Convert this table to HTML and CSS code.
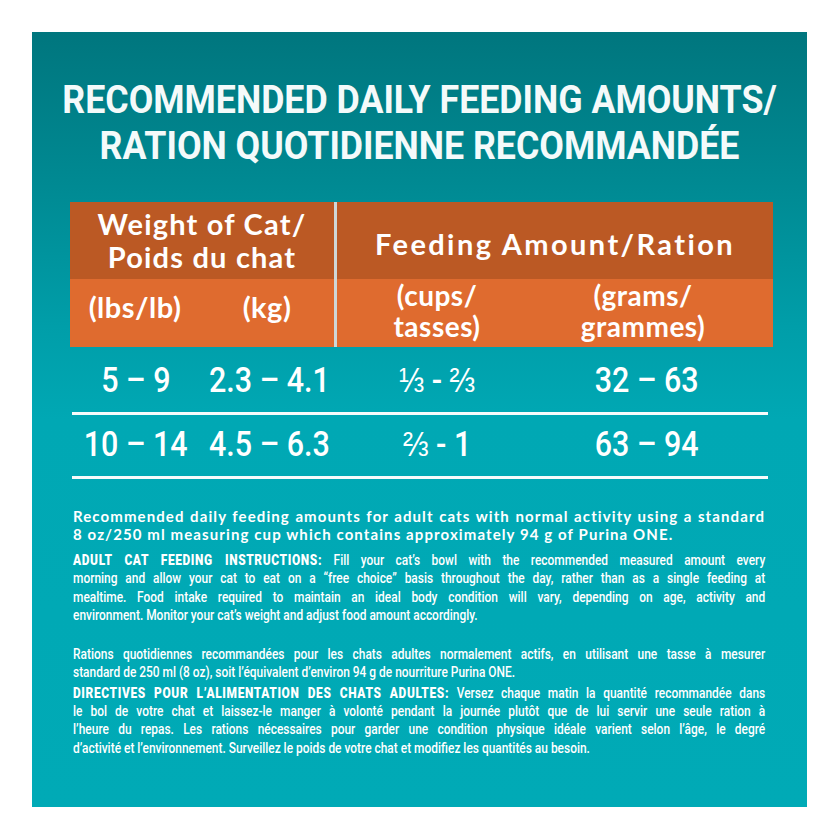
FILE: index.html
```html
<!DOCTYPE html>
<html lang="en">
<head>
<meta charset="utf-8">
<title>Recommended Daily Feeding Amounts</title>
<link rel="stylesheet" href="styles.css">
</head>
<body>
<div class="panel">
  <h1 class="title">RECOMMENDED DAILY FEEDING AMOUNTS/<br>RATION QUOTIDIENNE RECOMMANDÉE</h1>

  <div class="chart">
    <div class="cell dark weight">Weight of Cat/<br>Poids du chat</div>
    <div class="divider"></div>
    <div class="cell dark feeding">Feeding Amount/Ration</div>
    <div class="cell light unit c1">(lbs/lb)</div>
    <div class="cell light unit c2">(kg)</div>
    <div class="cell light unit2 c4">(cups/<br>tasses)</div>
    <div class="cell light unit2 c5">(grams/<br>grammes)</div>
  </div>

  <div class="rows">
    <div class="row r1">
      <span class="cellv"><span class="v">5 – 9</span></span>
      <span class="cellv"><span class="v">2.3 – 4.1</span></span>
      <span class="gap"></span>
      <span class="cellv"><span class="v frac">⅓ - ⅔</span></span>
      <span class="cellv grams"><span class="v">32 – 63</span></span>
    </div>
    <div class="row r2">
      <span class="cellv"><span class="v">10 – 14</span></span>
      <span class="cellv"><span class="v">4.5 – 6.3</span></span>
      <span class="gap"></span>
      <span class="cellv"><span class="v frac">⅔ - 1</span></span>
      <span class="cellv grams"><span class="v">63 – 94</span></span>
    </div>
  </div>

  <div class="notes">
    <p class="para p1">
      <span class="ln">Recommended daily feeding amounts for adult cats with normal activity using a standard</span>
      <span class="ln end">8 oz/250 ml measuring cup which contains approximately 94 g of Purina ONE.</span>
    </p>
    <div class="cond">
      <p class="para p2">
        <span class="ln"><span class="hd">ADULT CAT FEEDING INSTRUCTIONS:</span> Fill your cat’s bowl with the recommended measured amount every</span>
        <span class="ln">morning and allow your cat to eat on a “free choice” basis throughout the day, rather than as a single feeding at</span>
        <span class="ln">mealtime. Food intake required to maintain an ideal body condition will vary, depending on age, activity and</span>
        <span class="ln end">environment. Monitor your cat’s weight and adjust food amount accordingly.</span>
      </p>
      <p class="para p3">
        <span class="ln">Rations quotidiennes recommandées pour les chats adultes normalement actifs, en utilisant une tasse à mesurer</span>
        <span class="ln end">standard de 250 ml (8 oz), soit l’équivalent d’environ 94 g de nourriture Purina ONE.</span>
      </p>
      <p class="para p4">
        <span class="ln"><span class="hd">DIRECTIVES POUR L’ALIMENTATION DES CHATS ADULTES:</span> Versez chaque matin la quantité recommandée dans</span>
        <span class="ln">le bol de votre chat et laissez-le manger à volonté pendant la journée plutôt que de lui servir une seule ration à</span>
        <span class="ln">l’heure du repas. Les rations nécessaires pour garder une condition physique idéale varient selon l’âge, le degré</span>
        <span class="ln end">d’activité et l’environnement. Surveillez le poids de votre chat et modifiez les quantités au besoin.</span>
      </p>
    </div>
  </div>
</div>
</body>
</html>
```

FILE: styles.css
```css
html, body {
  margin: 0;
  padding: 0;
  background: #ffffff;
}

body {
  font-family: Roboto, "Liberation Sans", sans-serif;
}

.panel {
  margin: 32px 0 0 32px;
  width: 775px;
  height: 775px;
  box-sizing: border-box;
  padding-top: 45px;
  overflow: hidden;
  color: #ffffff;
  background: linear-gradient(180deg, #00767e 0%, #008a93 20%, #009ea9 38%, #00a8b4 50%, #00aab6 100%);
}

.title {
  margin: 0;
  font-family: Roboto, "Liberation Sans", sans-serif;
  font-weight: 700;
  font-size: 38px;
  line-height: 46px;
  text-align: center;
  color: #f4fafa;
  white-space: nowrap;
  transform: scaleX(0.94);
  transform-origin: 50% 0;
}

/* ---------- header table ---------- */
.chart {
  display: grid;
  grid-template-columns: 130px 134px 3px 200px 236px;
  grid-template-rows: 77px 68px;
  margin: 33px 0 0 38px;
  width: 703px;
  font-family: Lato, "Open Sans", sans-serif;
  font-weight: 700;
}

.cell {
  text-align: center;
  box-sizing: border-box;
  color: #ffffff;
}

.dark {
  background: #bb5924;
}

.light {
  background: #df6b2f;
}

.weight {
  grid-column: 1 / 3;
  grid-row: 1;
  font-size: 29px;
  line-height: 33px;
  padding-top: 5px;
  letter-spacing: 1.2px;
}

.feeding {
  grid-column: 4 / 6;
  grid-row: 1;
  font-size: 29px;
  line-height: 33px;
  padding-top: 25px;
  letter-spacing: 2.4px;
}

.divider {
  grid-column: 3;
  grid-row: 1 / 3;
  background: #cfd7d7;
}

.unit {
  grid-row: 2;
  font-size: 29px;
  line-height: 33px;
  padding-top: 11px;
  letter-spacing: 0.5px;
}

.unit2 {
  grid-row: 2;
  font-size: 28px;
  line-height: 31px;
  padding-top: 1px;
  letter-spacing: 0.5px;
}

.c1 { grid-column: 1; }
.c2 { grid-column: 2; }
.c4 { grid-column: 4; }
.c5 { grid-column: 5; padding-right: 24px; }

/* ---------- data rows ---------- */
.rows {
  margin-left: 40px;
  width: 696px;
}

.row {
  display: grid;
  grid-template-columns: 128px 134px 3px 200px 231px;
  box-sizing: border-box;
  border-bottom: 3px solid #f6fbfb;
  font-family: Roboto, "Liberation Sans", sans-serif;
  font-weight: 500;
  font-size: 35px;
  line-height: 35px;
}

.r1 {
  height: 68px;
  padding-top: 16px;
}

.r2 {
  height: 64px;
  padding-top: 12px;
}

.cellv {
  text-align: center;
  white-space: nowrap;
}

.v {
  display: inline-block;
  transform: scaleX(0.87);
  transform-origin: 50% 0;
}

.frac {
  font-size: 35px;
  font-weight: 500;
}

.grams {
  padding-right: 12px;
}

/* ---------- notes ---------- */
.notes {
  margin-top: 28px;
  padding: 0 42px 0 41px;
}

.para {
  margin: 0;
}

.ln {
  display: block;
  text-align: justify;
  text-align-last: justify;
}

.ln.end {
  text-align-last: left;
}

.p1 {
  font-family: Lato, "Open Sans", sans-serif;
  font-weight: 700;
  font-size: 15px;
  line-height: 18px;
  letter-spacing: 1.1px;
}

.cond {
  width: 899px;
  transform: scaleX(0.77);
  transform-origin: 0 0;
  font-family: Roboto, "Liberation Sans", sans-serif;
  font-weight: 500;
  font-size: 15.5px;
  line-height: 18.3px;
}

.p2 { margin-top: 8px; }
.p3 { margin-top: 21px; }
.p4 { margin-top: 2px; }

.hd {
  font-weight: 900;
  font-size: 15.5px;
  line-height: 10px;
  letter-spacing: 0.8px;
}
```
